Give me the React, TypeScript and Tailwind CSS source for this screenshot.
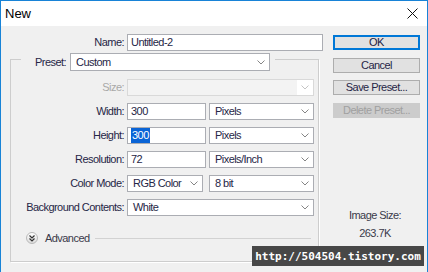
import React from 'react'

function Chevron({ color = '#858585' }: { color?: string }) {
  return (
    <svg width="8" height="5" viewBox="0 0 8 5" className="shrink-0">
      <path d="M0.5 0.5 L4 4 L7.5 0.5" fill="none" stroke={color} strokeWidth="1" />
    </svg>
  )
}

function Select({ value, className }: { value: string; className: string }) {
  return (
    <div className={`flex items-center justify-between border border-[#abadb3] bg-white pl-[5px] pr-[4px] ${className}`}>
      <span>{value}</span>
      <Chevron />
    </div>
  )
}

function Field({ value, className }: { value: React.ReactNode; className: string }) {
  return (
    <div className={`flex items-center border border-[#abadb3] bg-white pl-[3px] ${className}`}>{value}</div>
  )
}

function Btn({ children, className = '' }: { children: React.ReactNode; className?: string }) {
  return (
    <div className={`w-[87px] h-[15px] flex items-center justify-center border ${className}`}>{children}</div>
  )
}

export default function App() {
  return (
    <div className="relative w-[428px] h-[272px] overflow-hidden border border-b-0 border-[#1883d7] bg-[#f0f0f0] text-[11px] leading-none tracking-[-0.55px] text-[#262646] font-['Liberation_Sans',Arial,sans-serif]">
      {/* title bar */}
      <div className="h-[25px] bg-white flex items-center justify-between pl-[4px] pr-[9px]">
        <span className="text-[13px] tracking-normal text-black">New</span>
        <svg width="11" height="11" viewBox="0 0 11 11">
          <path d="M0.5 0.5 L10.5 10.5 M10.5 0.5 L0.5 10.5" stroke="#111" strokeWidth="1" />
        </svg>
      </div>

      <div className="flex">
        {/* left side */}
        <div className="w-[322px] pt-[8px]">
          <div className="flex items-center">
            <div className="w-[123px] text-right">Name:</div>
            <Field value="Untitled-2" className="ml-[3px] w-[196px] h-[17px]" />
          </div>

          <div className="ml-[9px] mt-[8px] w-[309px] h-[203px] border border-[#cdcdcd] shadow-[1px_1px_0_#ffffff]">
            {/* preset sits on the border */}
            <div className="-mt-[7px] ml-[10px] w-[254px] flex items-center bg-[#f0f0f0] pl-[14px]">
              <span>Preset:</span>
              <Select value="Custom" className="ml-[4px] w-[200px] h-[18px]" />
            </div>

            <div className="mt-[8px] flex flex-col gap-[7px]">
              <div className="flex items-center">
                <div className="w-[113px] text-right text-[#a8a8a8]">Size:</div>
                <div className="ml-[3px] w-[187px] h-[17px] flex items-center justify-end border border-[#d9d9d9] bg-[#f3f3f3]">
                  <div className="h-full w-[16px] bg-white flex items-center justify-center">
                    <Chevron color="#c4c4c4" />
                  </div>
                </div>
              </div>
              <div className="flex items-center">
                <div className="w-[113px] text-right">Width:</div>
                <Field value="300" className="ml-[3px] w-[79px] h-[17px]" />
                <Select value="Pixels" className="ml-[3px] w-[105px] h-[17px]" />
              </div>
              <div className="flex items-center">
                <div className="w-[113px] text-right">Height:</div>
                <Field
                  value={<span className="bg-[#0a64d6] text-white px-[1px] py-[2px]">300</span>}
                  className="ml-[3px] w-[79px] h-[17px]"
                />
                <Select value="Pixels" className="ml-[3px] w-[105px] h-[17px]" />
              </div>
              <div className="flex items-center">
                <div className="w-[113px] text-right">Resolution:</div>
                <Field value="72" className="ml-[3px] w-[79px] h-[17px]" />
                <Select value="Pixels/Inch" className="ml-[3px] w-[105px] h-[17px]" />
              </div>
              <div className="flex items-center">
                <div className="w-[113px] text-right">Color Mode:</div>
                <Select value="RGB Color" className="ml-[3px] w-[76px] h-[17px]" />
                <Select value="8 bit" className="ml-[6px] w-[105px] h-[17px]" />
              </div>
              <div className="flex items-center">
                <div className="w-[113px] text-right">Background Contents:</div>
                <Select value="White" className="ml-[3px] w-[187px] h-[17px]" />
              </div>
            </div>

            {/* advanced */}
            <div className="mt-[16px] flex items-center pl-[15px] pr-[7px]">
              <div className="w-[12px] h-[12px] rounded-full border border-[#b9b9b9] bg-gradient-to-b from-white to-[#dcdcdc] flex items-center justify-center">
                <svg width="6" height="7" viewBox="0 0 6 7">
                  <path d="M0.5 0.5 L3 3 L5.5 0.5 M0.5 3.5 L3 6 L5.5 3.5" fill="none" stroke="#333" strokeWidth="1.2" />
                </svg>
              </div>
              <span className="ml-[7px] text-[#3a3a4a]">Advanced</span>
              <div className="ml-[5px] flex-1 h-px bg-[#d2d2d2]" />
            </div>
          </div>
        </div>

        {/* right side */}
        <div className="flex-1 flex flex-col pl-[10px] pt-[9px]">
          <Btn className="border-[#0078d7] bg-[#e1e1e1] shadow-[inset_0_0_0_1px_#0078d7] text-[#202040]">OK</Btn>
          <Btn className="mt-[8px] border-[#adadad] bg-[#e1e1e1]">Cancel</Btn>
          <Btn className="mt-[7px] border-[#adadad] bg-[#e1e1e1]">Save Preset...</Btn>
          <Btn className="mt-[8px] border-[#cccccc] bg-[#cccccc] text-[#a0a0a0]">Delete Preset...</Btn>
          <div className="mt-[92px] -ml-[10px] text-center text-[#3a3a4a]">Image Size:</div>
          <div className="mt-[7px] -ml-[10px] text-center text-[#3a3a4a]">263.7K</div>
        </div>
      </div>

      {/* blog watermark */}
      <div className="absolute right-[3px] bottom-[6px] h-[20px] w-[172px] flex items-center justify-center bg-[#474747] text-white text-[11px] font-bold tracking-normal font-['DejaVu_Sans_Mono',monospace]">
        http://504504.tistory.com
      </div>
    </div>
  )
}
